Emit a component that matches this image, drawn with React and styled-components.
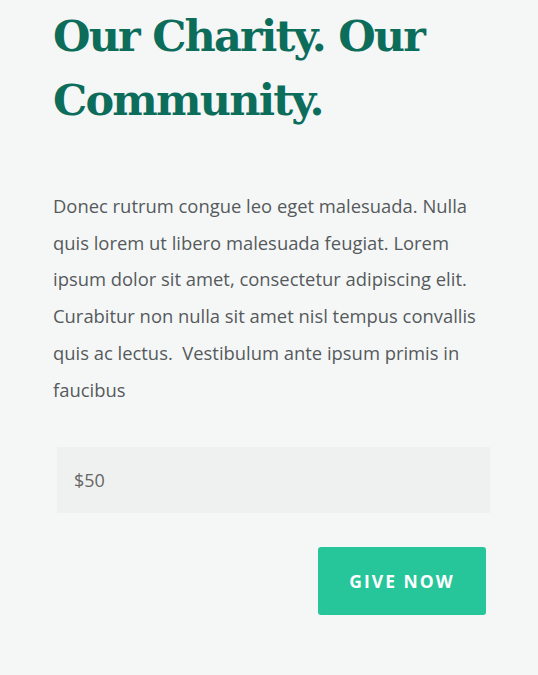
import styled, { createGlobalStyle } from "styled-components";

const GlobalStyle = createGlobalStyle`
  html, body {
    margin: 0;
    padding: 0;
    background: #f5f7f7;
  }
`;

export default function App() {
  return (
    <>
      <GlobalStyle />
      <Section>
        <Title>Our Charity. Our Community.</Title>
        <Text>
          Donec rutrum congue leo eget malesuada. Nulla quis lorem ut libero malesuada feugiat. Lorem ipsum dolor sit
          amet, consectetur adipiscing elit. Curabitur non nulla sit amet nisl tempus convallis quis ac lectus.&nbsp;
          Vestibulum ante ipsum primis in faucibus
        </Text>
        <Form onSubmit={(e) => e.preventDefault()}>
          <Amount type="text" defaultValue="$50" />
          <Actions>
            <GiveButton type="submit">Give Now</GiveButton>
          </Actions>
        </Form>
      </Section>
    </>
  );
}

const Section = styled.div`
  width: 434px;
  padding: 0 0 60px 53px;
  box-sizing: content-box;
`;

const Title = styled.h1`
  margin: 0;
  padding-top: 4px;
  font-family: "DejaVu Serif", serif;
  font-weight: bold;
  font-size: 43px;
  line-height: 64px;
  letter-spacing: -1.8px;
  color: #0d6d5b;
`;

const Text = styled.p`
  margin: 56px 0 0;
  font-family: "Open Sans", sans-serif;
  font-size: 18.4px;
  line-height: 36.7px;
  color: #555a5c;
`;

const Form = styled.form`
  display: flex;
  flex-direction: column;
  margin-top: 39px;
`;

const Amount = styled.input`
  margin-left: 4px;
  width: 433px;
  height: 66px;
  box-sizing: border-box;
  border: none;
  outline: none;
  background: #eff1f0;
  padding: 0 17px;
  font-family: "Open Sans", sans-serif;
  font-size: 18px;
  color: #666;
`;

const Actions = styled.div`
  display: flex;
  justify-content: flex-end;
  margin-top: 34px;
  padding-right: 1px;
`;

const GiveButton = styled.button`
  width: 168px;
  height: 68px;
  border: none;
  border-radius: 3px;
  background: #26c69a;
  color: #fff;
  font-family: "Open Sans", sans-serif;
  font-weight: bold;
  font-size: 17.5px;
  letter-spacing: 2px;
  text-transform: uppercase;
  cursor: pointer;
`;
